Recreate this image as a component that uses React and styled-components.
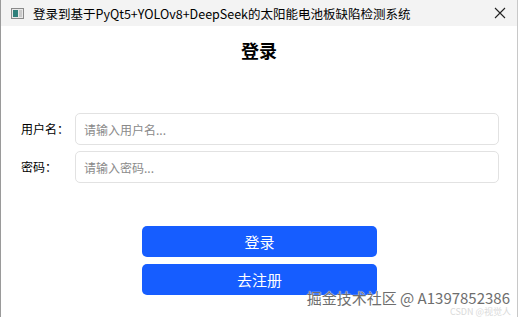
import React from 'react';
import styled, { createGlobalStyle } from 'styled-components';

const Global = createGlobalStyle`
  html, body { margin: 0; padding: 0; background: #ffffff; }
  body { font-family: "Microsoft YaHei", "Noto Sans CJK SC", "Noto Sans", sans-serif; }
`;

const Window = styled.div`
  position: relative;
  width: 518px;
  height: 317px;
  box-sizing: border-box;
  border-left: 1px solid #9a9a9a;
  border-right: 1px solid #c8c8c8;
  background: #ffffff;
  display: flex;
  flex-direction: column;
  overflow: hidden;
`;

const TitleBar = styled.div`
  height: 26px;
  display: flex;
  align-items: center;
  background: #f3f3f3;
  padding-left: 10px;
  gap: 9px;
`;

const TitleText = styled.div`
  flex: 1;
  font-size: 12.5px;
  color: #000;
  white-space: nowrap;
`;

const CloseBtn = styled.div`
  width: 30px;
  display: flex;
  justify-content: center;
  align-items: center;
  margin-right: 2px;
`;

const Heading = styled.div`
  text-align: center;
  font-size: 18px;
  font-weight: 700;
  margin-top: 11px;
  color: #000;
`;

const Form = styled.div`
  display: flex;
  flex-direction: column;
  gap: 6px;
  margin-top: 50px;
  padding: 0 18px 0 20px;
`;

const Row = styled.div`
  display: grid;
  grid-template-columns: 54px 1fr;
  align-items: center;
`;

const Label = styled.div`
  font-size: 12px;
  color: #000;
  padding-bottom: 2px;
`;

const Input = styled.input`
  height: 32px;
  box-sizing: border-box;
  border: 1px solid #e2e2e2;
  border-radius: 5px;
  padding: 0 8px;
  font-size: 12px;
  font-family: inherit;
  background: #fff;
  &::placeholder { color: #8a8a8a; }
`;

const Actions = styled.div`
  display: flex;
  flex-direction: column;
  align-items: center;
  gap: 7px;
  margin-top: 43px;
  padding-left: 1px;
`;

const Button = styled.button`
  width: 235px;
  height: 31px;
  border: none;
  border-radius: 5px;
  background: #165dff;
  color: #fff;
  font-size: 15px;
  font-family: inherit;
`;

const Watermark = styled.div`
  position: absolute;
  right: 7px;
  bottom: 9px;
  font-size: 15px;
  color: #6e6e6e;
  text-shadow: 0 0 1px #fff, 0 0 1px #fff;
  white-space: nowrap;
`;

const Watermark2 = styled.div`
  position: absolute;
  right: 6px;
  bottom: 0;
  font-size: 9px;
  line-height: 11px;
  color: #dadada;
  white-space: nowrap;
`;

const AppIcon = () => (
  <svg width="13" height="11" viewBox="0 0 13 11">
    <rect x="0.5" y="0.5" width="12" height="10" fill="#e8e8e8" stroke="#8a8a8a" />
    <rect x="2" y="2" width="5" height="7" fill="#2f7f7a" />
    <rect x="8" y="2" width="3" height="7" fill="#c9c9c9" />
  </svg>
);

const CloseIcon = () => (
  <svg width="12" height="12" viewBox="0 0 12 12">
    <path d="M1 1 L11 11 M11 1 L1 11" stroke="#222" strokeWidth="1.1" />
  </svg>
);

export default function App() {
  return (
    <>
      <Global />
      <Window>
        <TitleBar>
          <AppIcon />
          <TitleText>登录到基于PyQt5+YOLOv8+DeepSeek的太阳能电池板缺陷检测系统</TitleText>
          <CloseBtn><CloseIcon /></CloseBtn>
        </TitleBar>
        <Heading>登录</Heading>
        <Form>
          <Row>
            <Label>用户名：</Label>
            <Input placeholder="请输入用户名..." />
          </Row>
          <Row>
            <Label>密码：</Label>
            <Input placeholder="请输入密码..." type="password" />
          </Row>
        </Form>
        <Actions>
          <Button>登录</Button>
          <Button>去注册</Button>
        </Actions>
        <Watermark>掘金技术社区 @ A1397852386</Watermark>
        <Watermark2>CSDN @视觉人</Watermark2>
      </Window>
    </>
  );
}
